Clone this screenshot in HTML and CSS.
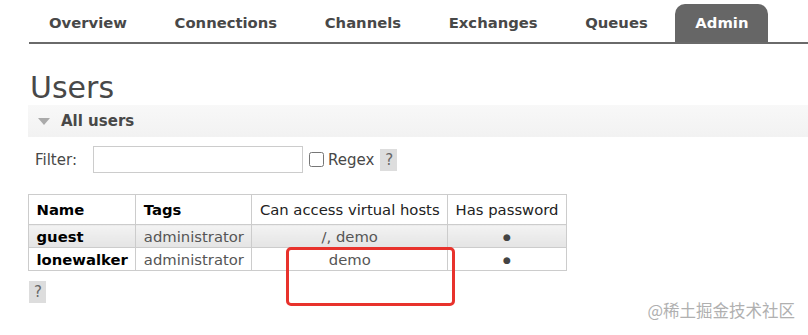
FILE: index.html
```html
<!DOCTYPE html>
<html lang="en">
<head>
    <meta charset="UTF-8">
    <title>RabbitMQ Management - Users</title>
    <link rel="stylesheet" href="styles.css">
</head>
<body>
    <ul class="tabs">
        <li><a href="#">Overview</a></li>
        <li><a href="#">Connections</a></li>
        <li><a href="#">Channels</a></li>
        <li><a href="#">Exchanges</a></li>
        <li><a href="#">Queues</a></li>
        <li class="selected"><a href="#">Admin</a></li>
    </ul>

    <div class="main">
        <h1>Users</h1>
        <div class="section">
            <h2><span class="arrow"></span>All users</h2>
            <div class="filter">
                <label for="filter">Filter:</label>
                <input type="text" id="filter">
                <label class="regex"><input type="checkbox">Regex</label>
                <span class="help">?</span>
            </div>

            <table class="list">
                <thead>
                    <tr>
                        <th>Name</th>
                        <th>Tags</th>
                        <th>Can access virtual hosts</th>
                        <th>Has password</th>
                    </tr>
                </thead>
                <tbody>
                    <tr class="alt1">
                        <td class="name">guest</td>
                        <td>administrator</td>
                        <td class="c">/, demo</td>
                        <td class="c"><span class="dot">&#9679;</span></td>
                    </tr>
                    <tr class="alt2">
                        <td class="name">lonewalker</td>
                        <td>administrator</td>
                        <td class="c">demo</td>
                        <td class="c"><span class="dot">&#9679;</span></td>
                    </tr>
                </tbody>
            </table>
            <span class="help help-bottom">?</span>
        </div>
    </div>

    <!-- rectangle drawn over the screenshot -->
    <div class="mark"></div>
    <div class="watermark">@稀土掘金技术社区</div>
</body>
</html>
```

FILE: styles.css
```css
body {
    margin: 0;
    background: #fff;
    color: #484848;
    font-family: 'DejaVu Sans', Verdana, sans-serif;
    font-size: 15px;
    position: relative;
    height: 335px;
    overflow: hidden;
}

.tabs {
    list-style: none;
    margin: 4px 0 0 29px;
    padding: 0;
    display: flex;
    gap: 7.6px;
    border-bottom: 2px solid #6a6a6a;
    height: 38px;
}

.tabs li a {
    display: block;
    height: 38px;
    line-height: 38px;
    padding: 0 20px;
    color: #484848;
    font-weight: bold;
    font-size: 14.8px;
    text-decoration: none;
    border-radius: 10px 10px 0 0;
}

.tabs li.selected a {
    background: #666;
    color: #fff;
}

.main {
    padding: 0 0 0 28px;
}

h1 {
    margin: 27px 0 0 2px;
    font-size: 30px;
    font-weight: normal;
    line-height: 34px;
    color: #484848;
}

h2 {
    margin: 0;
    height: 31px;
    line-height: 31px;
    padding-top: 1px;
    background: linear-gradient(to bottom, #f8f8f8, #f2f2f2);
    font-size: 15px;
    color: #484848;
    padding-left: 10px;
    display: flex;
    align-items: center;
}

.arrow {
    width: 0;
    height: 0;
    border-left: 6px solid transparent;
    border-right: 6px solid transparent;
    border-top: 7px solid #aaa;
    margin-right: 11px;
}

.filter {
    display: flex;
    align-items: center;
    margin: 9px 0 0 7px;
    height: 27px;
}

.filter input[type=text] {
    width: 206px;
    height: 23px;
    margin: 0 0 0 16px;
    border: 1px solid #ccc;
    padding: 1px;
}

.regex {
    display: flex;
    align-items: center;
    margin-left: 6px;
}

.regex input {
    margin: 0 4px 0 0;
    width: 15px;
    height: 15px;
}

.help {
    display: inline-block;
    background: #ddd;
    color: #666;
    padding: 3px 4px 3px 5px;
    margin-left: 6px;
    font-size: 15px;
    line-height: 16px;
}

table.list {
    margin-top: 21px;
    border-collapse: collapse;
}

.list th, .list td {
    border: 1px solid #ccc;
    padding: 0 7.5px;
}

.list th {
    height: 29px;
    text-align: left;
    color: #000;
    font-size: 14.8px;
}

.list th:nth-child(n+3) {
    font-weight: normal;
    color: #222;
    text-align: center;
}

.list td {
    height: 22px;
    font-size: 14.8px;
    color: #555;
}

.list td.name {
    font-weight: bold;
    color: #000;
}

.list td.c {
    text-align: center;
}

.dot {
    font-size: 9px;
    color: #444;
    vertical-align: 2px;
}

.alt1 td {
    background: linear-gradient(to bottom, #f3f3f3, #e4e4e4);
}

.alt2 td {
    background: #fff;
}

.help-bottom {
    margin: 10px 0 0 1px;
    padding: 3px 4px 3px 5px;
}

.mark {
    position: absolute;
    left: 286px;
    top: 247px;
    width: 163px;
    height: 53px;
    border: 3px solid #e8322c;
    border-radius: 5px;
}

.watermark {
    position: absolute;
    right: 13px;
    bottom: 13px;
    color: #b0b0b0;
    font-family: 'Noto Sans CJK SC', sans-serif;
    font-size: 16.5px;
}
```
